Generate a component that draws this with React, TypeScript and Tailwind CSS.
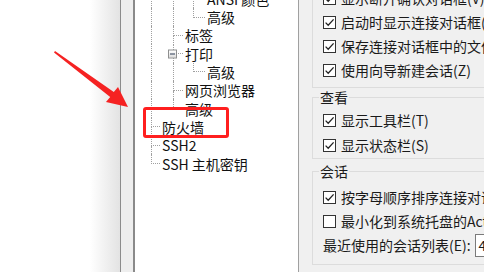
import React from "react";

type TreeNode = {
  label: string;
  depth: number;
  last: boolean;
  expander?: boolean;
};

const tree: TreeNode[] = [
  { label: "ANSI 颜色", depth: 2, last: false },
  { label: "高级", depth: 2, last: true },
  { label: "标签", depth: 1, last: false },
  { label: "打印", depth: 1, last: false, expander: true },
  { label: "高级", depth: 2, last: true },
  { label: "网页浏览器", depth: 1, last: false },
  { label: "高级", depth: 1, last: true },
  { label: "防火墙", depth: 0, last: false },
  { label: "SSH2", depth: 0, last: false },
  { label: "SSH 主机密钥", depth: 0, last: true },
];

// widths of the ancestor guide columns and of the connector per depth
const guideWidths = ["w-[22px]", "w-[20px]"];
const connectorWidths = ["w-[9px]", "w-[10px]", "w-[12px]"];

function TreeRow({ node }: { node: TreeNode }) {
  return (
    <div className="flex h-[18.33px] items-stretch">
      {guideWidths.slice(0, node.depth).map((w, i) => (
        <div key={i} className={`${w} shrink-0 border-l border-dotted border-[#a0a0a0]`} />
      ))}
      <div className={`relative flex shrink-0 flex-col ${connectorWidths[node.depth]}`}>
        <div className="flex-1 border-b border-l border-dotted border-[#a0a0a0]" />
        <div className={node.last ? "flex-1" : "flex-1 border-l border-dotted border-[#a0a0a0]"} />
        {node.expander && (
          <span className="absolute left-[-5px] top-1/2 flex h-[9px] w-[9px] -translate-y-1/2 items-center justify-center border border-[#8e8f8f] bg-linear-to-b from-white to-[#dcdcdc]">
            <span className="h-px w-[5px] bg-[#2b3a55]" />
          </span>
        )}
      </div>
      <span className="ml-[2px] flex items-center whitespace-nowrap text-[14px] leading-[18px] text-[#111]">
        {node.label}
      </span>
    </div>
  );
}

function Check({ checked }: { checked: boolean }) {
  return (
    <span className="flex h-[13px] w-[13px] shrink-0 items-center justify-center border border-[#333] bg-white">
      {checked && (
        <svg viewBox="0 0 11 11" className="h-[11px] w-[11px]">
          <path d="M1.6 5.6 L4.2 8.3 L9.6 2.4" fill="none" stroke="#222" strokeWidth="1.3" />
        </svg>
      )}
    </span>
  );
}

function CheckRow({ label, checked = true }: { label: string; checked?: boolean }) {
  return (
    <div className="ml-[4px] flex h-[24px] items-center gap-[5px] whitespace-nowrap">
      <Check checked={checked} />
      <span>{label}</span>
    </div>
  );
}

export default function App() {
  return (
    <div className="relative flex h-[272px] w-[484px] overflow-hidden bg-white font-['Noto_Sans_CJK_SC',sans-serif] text-[14px] leading-[18px] text-[#1a1a1a]">
      <div className="w-[120px] shrink-0 bg-linear-to-r from-white from-75% to-[#e3e3e3]" />
      <div className="w-px shrink-0 bg-[#8c8c8c]" />
      <div className="w-[12px] shrink-0 bg-[#eeeeee]" />

      {/* options tree */}
      <div className="w-[166px] shrink-0 border-l-2 border-r border-l-[#8a8a8a] border-r-[#a0a0a0] bg-white pl-[16px]">
        <div className="-mt-[10.5px]">
          {tree.map((n, i) => (
            <TreeRow key={i} node={n} />
          ))}
        </div>
      </div>

      {/* settings */}
      <div className="flex min-w-0 flex-1 flex-col bg-[#f0f0f0] pl-[13px]">
        <div className="-mt-[14px] w-[240px] shrink-0 border-x border-b border-[#dcdcdc] px-[6px] pb-[5px]">
          <CheckRow label="显示断开确认对话框(V)" />
          <CheckRow label="启动时显示连接对话框(O)" />
          <CheckRow label="保存连接对话框中的文件夹状态(F)" />
          <CheckRow label="使用向导新建会话(Z)" />
        </div>

        <fieldset className="w-[240px] shrink-0 border border-[#dcdcdc] px-[6px] pb-[1px] pt-[2px]">
          <legend className="px-[1px] leading-[18px]">查看</legend>
          <CheckRow label="显示工具栏(T)" />
          <div className="mt-[1px]">
            <CheckRow label="显示状态栏(S)" />
          </div>
        </fieldset>

        <fieldset className="mt-[3px] w-[240px] shrink-0 border border-[#dcdcdc] px-[6px] pb-[7px] pt-[5px]">
          <legend className="px-[1px] leading-[18px]">会话</legend>
          <CheckRow label="按字母顺序排序连接对话框中的会话(A)" />
          <CheckRow label="最小化到系统托盘的Activator(M)" checked={false} />
          <div className="ml-[4px] flex h-[24px] items-center gap-[4px] whitespace-nowrap">
            <span>最近使用的会话列表(E):</span>
            <div className="flex h-[23px] w-[40px] shrink-0 items-center border border-[#7a7a7a] bg-white pl-[3px]">
              4
            </div>
          </div>
        </fieldset>
      </div>

      {/* annotation: highlight box */}
      <div className="pointer-events-none absolute left-[143px] top-[107px] h-[31px] w-[86px] rounded-[3px] border-[3px] border-[#ff1f1f]" />

      {/* annotation: arrow */}
      <svg className="pointer-events-none absolute left-0 top-0" width="484" height="272" viewBox="0 0 484 272">
        <polygon
          points="55,51 113.8,92.1 118,87 128,107 106,102 110.2,96.9 54,52.5"
          fill="#f52222"
        />
      </svg>
    </div>
  );
}
